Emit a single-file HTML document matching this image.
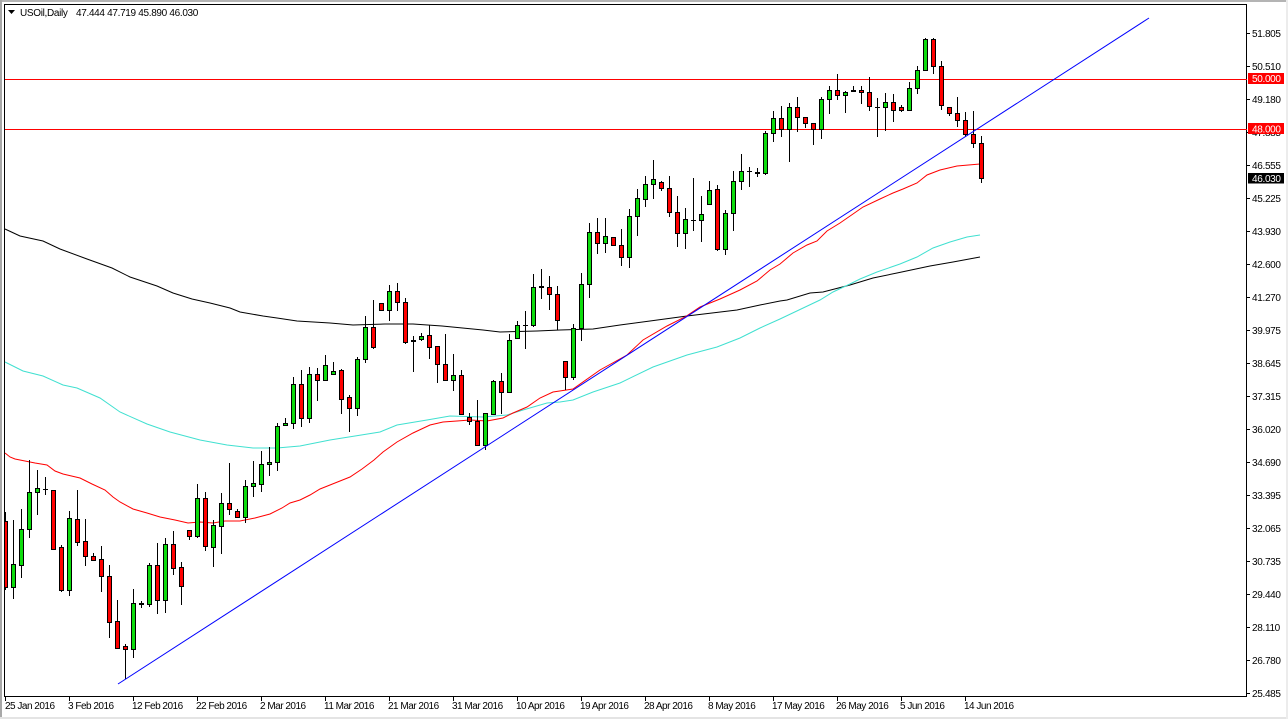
<!DOCTYPE html>
<html><head><meta charset="utf-8"><title>USOil,Daily</title>
<style>
html,body{margin:0;padding:0;background:#fff;width:1288px;height:719px;overflow:hidden}
svg{display:block}
text{font-family:"Liberation Sans",sans-serif;font-size:10px;fill:#000;letter-spacing:-.32px}
.d text{letter-spacing:-.5px}
</style></head><body>
<svg width="1288" height="719" viewBox="0 0 1288 719" xmlns="http://www.w3.org/2000/svg">
<rect width="1288" height="719" fill="#fff"/>
<rect x="0" y="0" width="1288" height="2" fill="#b4b4b4"/>
<rect x="0" y="0" width="2" height="719" fill="#a8a8a8"/>
<rect x="0" y="717" width="1288" height="2" fill="#e4e4e4"/>
<rect x="1286" y="0" width="2" height="719" fill="#ececec"/>
<path d="M4.5 4.5H1246.5V696.5H4.5Z" fill="none" stroke="#000"/>
<path d="M5 79.5H1247M5 129.5H1247" stroke="#f00" fill="none"/>
<!-- MAs -->
<polyline fill="none" stroke="#000" points="5,229 20,236 43,241 60,249 87,259 112,268 130,277 157,286 173,293 192,299 210,303 230,308 240,312 263,316 277,318 297,321 330,323 353,325 385,324 413,324 442,326 483,330 500,332 537,331 560,330 593,329 620,325 650,321 687,316 737,310 760,305 780,301 787,300 810,293 823,292 850,285 873,278 897,273 930,266 953,262 980,257"/>
<polyline fill="none" stroke="#40e0d0" points="5,362 23,371 43,376 63,385 77,388 100,398 120,412 147,424 170,432 200,440 227,445 253,448 277,448 300,446 330,440 380,432 397,425 427,420 450,416 483,417 507,415 523,410 547,403 560,402 573,400 593,392 620,383 653,367 687,355 717,347 740,338 760,328 780,319 820,300 833,292 850,284 860,279 877,272 900,264 917,257 933,248 950,242 967,237 980,235"/>
<polyline fill="none" stroke="#f00" points="5,453 10,457 15,459 25,461 35,463 47,465 55,471 63,474 80,478 92,484 105,490 113,497 120,502 133,509 147,513 160,517 175,520 188,523 200,522 213,523 225,521 240,521 255,518 270,514 282,508 290,503 300,500 310,495 320,489 335,483 350,477 362,469 374,460 383,452 397,442 413,433 430,425 443,422 457,421 470,420 487,421 503,418 513,413 527,407 540,398 553,392 573,389 600,370 627,355 643,340 667,326 685,317 700,307 720,299 740,290 757,281 770,270 780,264 793,253 807,245 817,241 827,231 840,223 853,214 863,207 880,199 893,193 903,189 917,183 927,175 940,170 957,166 980,164"/>
<!-- wicks -->
<path fill="none" stroke="#000" d="M5.5 512V590M13.5 520V599M21.5 509V578M29.5 460V538M37.5 470V515M45.5 477V495M53.5 490V550M61.5 545V592M69.5 511V596M77.5 490V546M85.5 519V566M93.5 553V561M101.5 546V592M109.5 565V638M117.5 600V649M125.5 644V679M133.5 589V658M141.5 601V608M149.5 563V607M157.5 543V614M165.5 538V613M173.5 531V575M181.5 562V605M189.5 530V540M197.5 484V538M205.5 492V551M213.5 520V567M221.5 493V554M229.5 463V515M237.5 509V517M245.5 480V523M253.5 461V497M261.5 451V492M269.5 447V476M277.5 423V471M285.5 418V426M293.5 377V429M301.5 370V427M309.5 367V423M317.5 368V401M325.5 355V380M333.5 362V375M341.5 369V414M349.5 395V432M357.5 357V416M365.5 316V363M373.5 300V349M381.5 303V310M389.5 285V321M397.5 283V311M405.5 298V344M413.5 336V372M421.5 333V341M429.5 325V359M437.5 346V383M445.5 334V380M453.5 354V391M461.5 370V414M469.5 413V425M477.5 400V446M485.5 413V450M493.5 380V414M501.5 373V414M509.5 334V392M517.5 321V339M525.5 311V349M533.5 274V327M541.5 269V299M549.5 276V310M557.5 286V330M565.5 361V390M573.5 324V380M581.5 273V341M589.5 223V298M597.5 218V254M605.5 218V253M613.5 237V246M621.5 229V266M629.5 209V268M637.5 189V236M645.5 176V207M653.5 160V199M661.5 181V191M669.5 176V217M677.5 196V247M685.5 208V249M693.5 178V231M701.5 196V242M709.5 181V204M717.5 185V251M725.5 210V255M733.5 171V231M741.5 154V190M749.5 167V187M757.5 168V177M765.5 131V175M773.5 111V142M781.5 106V137M789.5 103V162M797.5 97V132M805.5 117V128M813.5 123V145M821.5 97V139M829.5 86V114M837.5 74V100M845.5 91V113M853.5 86V92M861.5 86V104M869.5 77V111M877.5 98V137M885.5 93V131M893.5 94V122M901.5 105V112M909.5 82V110M917.5 66V94M925.5 38V71M933.5 38V74M941.5 61V110M949.5 107V116M957.5 97V127M965.5 112V137M973.5 111V148M981.5 136V183"/>
<!-- dojis -->
<path fill="none" stroke="#000" d="M43 489.5h5M139 604.5h5M139 603.5h5M411 341.5h5M411 340.5h5M523 325.5h5M539 287.5h5M539 286.5h5M691 220.5h5M691 209.5h0M747 171.5h5M755 173.5h5M755 172.5h5M851 91.5h5M851 90.5h5M875 107.5h5"/>
<!-- green bodies -->
<path fill="#0ddc0d" stroke="#000" d="M11.5 564.5h4v23h-4zM19.5 529.5h4v36h-4zM27.5 492.5h4v37h-4zM35.5 488.5h4v4h-4zM67.5 518.5h4v72h-4zM131.5 603.5h4v46h-4zM147.5 565.5h4v39h-4zM163.5 544.5h4v56h-4zM195.5 498.5h4v38h-4zM211.5 525.5h4v22h-4zM219.5 503.5h4v23h-4zM243.5 486.5h4v31h-4zM251.5 483.5h4v3h-4zM259.5 464.5h4v20h-4zM267.5 462.5h4v2h-4zM275.5 426.5h4v36h-4zM283.5 423.5h4v2h-4zM291.5 384.5h4v39h-4zM307.5 374.5h4v44h-4zM323.5 365.5h4v15h-4zM331.5 371.5h4v3h-4zM355.5 359.5h4v49h-4zM363.5 327.5h4v32h-4zM387.5 291.5h4v19h-4zM419.5 336.5h4v3h-4zM451.5 375.5h4v5h-4zM483.5 413.5h4v32h-4zM491.5 381.5h4v33h-4zM507.5 340.5h4v52h-4zM515.5 325.5h4v13h-4zM531.5 287.5h4v38h-4zM571.5 328.5h4v49h-4zM579.5 284.5h4v44h-4zM587.5 232.5h4v52h-4zM603.5 236.5h4v7h-4zM627.5 216.5h4v41h-4zM635.5 198.5h4v18h-4zM643.5 184.5h4v15h-4zM651.5 179.5h4v5h-4zM683.5 219.5h4v14h-4zM699.5 214.5h4v6h-4zM707.5 190.5h4v14h-4zM723.5 213.5h4v36h-4zM731.5 181.5h4v32h-4zM739.5 171.5h4v10h-4zM763.5 133.5h4v40h-4zM771.5 118.5h4v15h-4zM787.5 107.5h4v22h-4zM819.5 99.5h4v30h-4zM827.5 90.5h4v9h-4zM843.5 92.5h4v3h-4zM883.5 102.5h4v5h-4zM907.5 88.5h4v22h-4zM915.5 70.5h4v18h-4zM923.5 39.5h4v31h-4z"/>
<!-- red bodies -->
<path fill="#f00" stroke="#000" d="M5 521.5h2.5v66h-2.5M51.5 490.5h4v59h-4zM59.5 547.5h4v43h-4zM75.5 519.5h4v23h-4zM83.5 541.5h4v15h-4zM91.5 556.5h4v4h-4zM99.5 559.5h4v17h-4zM107.5 576.5h4v46h-4zM115.5 621.5h4v27h-4zM123.5 646.5h4v3h-4zM155.5 565.5h4v35h-4zM171.5 544.5h4v24h-4zM179.5 567.5h4v19h-4zM187.5 530.5h4v6h-4zM203.5 498.5h4v48h-4zM227.5 503.5h4v6h-4zM235.5 511.5h4v6h-4zM299.5 384.5h4v34h-4zM315.5 374.5h4v6h-4zM339.5 370.5h4v29h-4zM347.5 397.5h4v11h-4zM371.5 327.5h4v20h-4zM379.5 303.5h4v7h-4zM395.5 291.5h4v11h-4zM403.5 302.5h4v40h-4zM427.5 335.5h4v12h-4zM435.5 346.5h4v18h-4zM443.5 364.5h4v16h-4zM459.5 375.5h4v39h-4zM467.5 417.5h4v4h-4zM475.5 421.5h4v24h-4zM499.5 381.5h4v11h-4zM547.5 287.5h4v7h-4zM555.5 294.5h4v26h-4zM563.5 361.5h4v16h-4zM595.5 232.5h4v11h-4zM611.5 237.5h4v8h-4zM619.5 245.5h4v12h-4zM659.5 182.5h4v6h-4zM667.5 188.5h4v24h-4zM675.5 212.5h4v21h-4zM715.5 189.5h4v60h-4zM779.5 118.5h4v11h-4zM795.5 107.5h4v10h-4zM803.5 117.5h4v6h-4zM811.5 123.5h4v6h-4zM835.5 90.5h4v5h-4zM859.5 90.5h4v2h-4zM867.5 92.5h4v14h-4zM891.5 102.5h4v8h-4zM899.5 107.5h4v3h-4zM931.5 39.5h4v27h-4zM939.5 66.5h4v39h-4zM947.5 107.5h4v6h-4zM955.5 113.5h4v7h-4zM963.5 120.5h4v14h-4zM971.5 134.5h4v9h-4zM979.5 143.5h4v35h-4z"/>
<!-- trendline -->
<line x1="118" y1="684" x2="1149" y2="18" stroke="#00f"/>
<!-- header -->
<path d="M8 10h7l-3.5 4z" fill="#000"/>
<text x="20" y="16">USOil,Daily</text>
<text x="76" y="16">47.444 47.719 45.890 46.030</text>
<!-- y axis ticks -->
<path stroke="#000" fill="none" d="M1247 33.5h3M1247 66.5h3M1247 99.5h3M1247 132.5h3M1247 165.5h3M1247 198.5h3M1247 231.5h3M1247 264.5h3M1247 297.5h3M1247 330.5h3M1247 363.5h3M1247 396.5h3M1247 429.5h3M1247 462.5h3M1247 495.5h3M1247 528.5h3M1247 561.5h3M1247 594.5h3M1247 627.5h3M1247 660.5h3M1247 693.5h3"/>
<g>
<text x="1252" y="37">51.805</text>
<text x="1252" y="70">50.510</text>
<text x="1252" y="103">49.180</text>
<text x="1252" y="136">47.885</text>
<text x="1252" y="169">46.555</text>
<text x="1252" y="202">45.225</text>
<text x="1252" y="235">43.930</text>
<text x="1252" y="268">42.600</text>
<text x="1252" y="301">41.270</text>
<text x="1252" y="334">39.975</text>
<text x="1252" y="367">38.645</text>
<text x="1252" y="400">37.315</text>
<text x="1252" y="433">36.020</text>
<text x="1252" y="466">34.690</text>
<text x="1252" y="499">33.395</text>
<text x="1252" y="532">32.065</text>
<text x="1252" y="565">30.735</text>
<text x="1252" y="598">29.440</text>
<text x="1252" y="631">28.110</text>
<text x="1252" y="664">26.780</text>
<text x="1252" y="697">25.485</text>
</g>
<rect x="1248" y="73" width="36" height="11" fill="#f00"/>
<text x="1252" y="82" style="fill:#fff">50.000</text>
<rect x="1248" y="123" width="36" height="11" fill="#f00"/>
<text x="1252" y="132.500" style="fill:#fff">48.000</text>
<rect x="1248" y="173" width="36" height="10.500" fill="#000"/>
<text x="1252" y="182" style="fill:#fff">46.030</text>
<!-- x axis -->
<path stroke="#000" fill="none" d="M5.500 697v4M69.500 697v4M133.500 697v4M197.500 697v4M261.500 697v4M325.500 697v4M389.500 697v4M453.500 697v4M517.500 697v4M581.500 697v4M645.500 697v4M709.500 697v4M773.500 697v4M837.500 697v4M901.500 697v4M965.500 697v4"/>
<g class="d">
<text x="5" y="709">25 Jan 2016</text>
<text x="68" y="709">3 Feb 2016</text>
<text x="132" y="709">12 Feb 2016</text>
<text x="196" y="709">22 Feb 2016</text>
<text x="260" y="709">2 Mar 2016</text>
<text x="324" y="709">11 Mar 2016</text>
<text x="388" y="709">21 Mar 2016</text>
<text x="452" y="709">31 Mar 2016</text>
<text x="516" y="709">10 Apr 2016</text>
<text x="580" y="709">19 Apr 2016</text>
<text x="644" y="709">28 Apr 2016</text>
<text x="708" y="709">8 May 2016</text>
<text x="772" y="709">17 May 2016</text>
<text x="836" y="709">26 May 2016</text>
<text x="900" y="709">5 Jun 2016</text>
<text x="964" y="709">14 Jun 2016</text>
</g>
</svg>
</body></html>
